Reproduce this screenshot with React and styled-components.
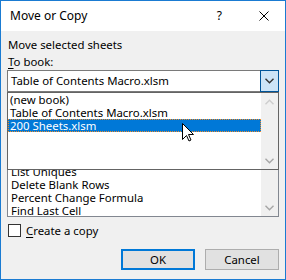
import React from "react";
import styled, { createGlobalStyle } from "styled-components";

const Global = createGlobalStyle`
  html, body { margin: 0; padding: 0; background: #fff; }
  body { font-family: "Noto Sans", "Open Sans", sans-serif; font-size: 11.4px; color: #000; }
`;

const books = ["(new book)", "Table of Contents Macro.xlsm", "200 Sheets.xlsm"];
const sheets = [
  "Table of Contents",
  "Sheet Index",
  "Hyperlinks",
  "Summary",
  "List Uniques",
  "Delete Blank Rows",
  "Percent Change Formula",
  "Find Last Cell",
];

export default function App() {
  return (
    <Window>
      <Global />
      <TitleBar>
        <Title>Move or Copy</Title>
        <Help>?</Help>
        <Close>
          <svg width="10" height="10" viewBox="0 0 10 10">
            <path d="M0.5 0.5 L9.5 9.5 M9.5 0.5 L0.5 9.5" stroke="#000" strokeWidth="1" />
          </svg>
        </Close>
      </TitleBar>

      <Body>
        <Label>Move selected sheets</Label>
        <Label gap="2px"><u>T</u>o book:</Label>

        <ComboWrap>
          <Combo>
            <ComboText>Table of Contents Macro.xlsm</ComboText>
            <DropBtn>
              <Chevron down color="#333" />
            </DropBtn>
          </Combo>

          <Popup>
            <PopupList>
              {books.map((b, i) => (
                <Row key={b} selected={i === 2}>{b}</Row>
              ))}
            </PopupList>
            <ScrollBar>
              <Chevron color="#cdcdcd" />
              <Chevron down color="#a6a6a6" />
            </ScrollBar>
          </Popup>
        </ComboWrap>

        <Label gap="4px">Before sheet:</Label>
        <ListBox>
          <ListItems>
            {sheets.map((s) => (
              <Item key={s}>{s}</Item>
            ))}
          </ListItems>
          <ScrollBar>
            <Chevron color="#a6a6a6" />
            <Chevron down color="#a6a6a6" />
          </ScrollBar>
        </ListBox>

        <CheckRow>
          <Box />
          <span><u>C</u>reate a copy</span>
        </CheckRow>

        <Buttons>
          <Button primary>OK</Button>
          <Button>Cancel</Button>
        </Buttons>
      </Body>

      <Cursor width="12" height="19" viewBox="0 0 12 19">
        <path d="M0.5 0.5 L0.5 16.5 L4.5 12.5 L7 18 L9 17 L6.5 11.5 L11.5 11.5 Z" fill="#fff" stroke="#000" strokeWidth="1" strokeLinejoin="miter" />
      </Cursor>
    </Window>
  );
}

function Chevron({ down, color }) {
  return (
    <svg width="9" height="6" viewBox="0 0 9 6">
      <path d={down ? "M0.5 0.8 L4.5 4.8 L8.5 0.8" : "M0.5 5.2 L4.5 1.2 L8.5 5.2"} fill="none" stroke={color} strokeWidth="1.4" />
    </svg>
  );
}

const Window = styled.div`
  position: relative;
  width: 286px;
  height: 280px;
  box-sizing: border-box;
  border: 1px solid #1a7bd2;
  background: #f0f0f0;
  display: flex;
  flex-direction: column;
  overflow: hidden;
`;

const TitleBar = styled.div`
  height: 30px;
  background: #fff;
  display: flex;
  align-items: center;
  padding: 0 16px 0 9px;
`;

const Title = styled.div`
  flex: 1;
  font-size: 12px;
  margin-top: -1px;
`;

const Help = styled.div`
  font-size: 12px;
  margin-right: 37px;
  margin-top: -1px;
`;

const Close = styled.div`
  display: flex;
  margin-top: -1px;
`;

const Body = styled.div`
  flex: 1;
  display: flex;
  flex-direction: column;
  padding: 6px 6px 0 6px;
`;

const Label = styled.div`
  line-height: 15px;
  margin-top: ${(p) => p.gap || "0"};
  padding-left: 1px;
  u { text-decoration: underline; text-underline-offset: 2px; }
`;

const ComboWrap = styled.div`
  position: relative;
  margin-top: 1px;
`;

const Combo = styled.div`
  height: 22px;
  box-sizing: border-box;
  border: 1px solid #7a7a7a;
  background: #fff;
  display: flex;
  align-items: stretch;
`;

const ComboText = styled.div`
  flex: 1;
  padding-left: 3px;
  line-height: 20px;
`;

const DropBtn = styled.div`
  width: 17px;
  background: #cce4f7;
  margin: -1px -1px -1px 0;
  border: 1px solid #005499;
  display: flex;
  align-items: center;
  justify-content: center;
`;

const Popup = styled.div`
  position: absolute;
  left: 0;
  right: 0;
  top: 22px;
  height: 78px;
  box-sizing: border-box;
  border: 1px solid #646464;
  background: #fff;
  display: flex;
  z-index: 2;
`;

const PopupList = styled.div`
  flex: 1;
`;

const Row = styled.div`
  height: 13px;
  line-height: 13px;
  padding-left: 2px;
  box-sizing: border-box;
  white-space: nowrap;
  background: ${(p) => (p.selected ? "#0078d7" : "transparent")};
  color: ${(p) => (p.selected ? "#fff" : "#000")};
  outline: ${(p) => (p.selected ? "1px dotted #f08c28" : "none")};
  outline-offset: -1px;
`;

const ScrollBar = styled.div`
  width: 17px;
  background: #f0f0f0;
  display: flex;
  flex-direction: column;
  justify-content: space-between;
  align-items: center;
  padding: 6px 0 5px;
  box-sizing: border-box;
`;

const ListBox = styled.div`
  height: 104px;
  box-sizing: border-box;
  border: 1px solid #828790;
  background: #fff;
  display: flex;
  margin-top: 2px;
  overflow: hidden;
`;

const ListItems = styled.div`
  flex: 1;
  overflow: hidden;
  margin-top: -1px;
`;

const Item = styled.div`
  height: 13px;
  line-height: 13px;
  padding-left: 3px;
  white-space: nowrap;
`;

const CheckRow = styled.div`
  display: flex;
  align-items: center;
  gap: 5px;
  margin-top: 6px;
  padding-left: 1px;
  line-height: 15px;
  u { text-decoration: underline; text-underline-offset: 2px; }
`;

const Box = styled.div`
  width: 13px;
  height: 13px;
  box-sizing: border-box;
  border: 1px solid #333;
  background: #fff;
`;

const Buttons = styled.div`
  display: flex;
  justify-content: flex-end;
  gap: 10px;
  margin-top: 11px;
`;

const Button = styled.div`
  width: 74px;
  height: 21px;
  box-sizing: border-box;
  background: #e1e1e1;
  border: ${(p) => (p.primary ? "2px solid #0078d7" : "1px solid #adadad")};
  display: flex;
  align-items: center;
  justify-content: center;
`;

const Cursor = styled.svg`
  position: absolute;
  left: 181px;
  top: 122px;
  z-index: 5;
`;
